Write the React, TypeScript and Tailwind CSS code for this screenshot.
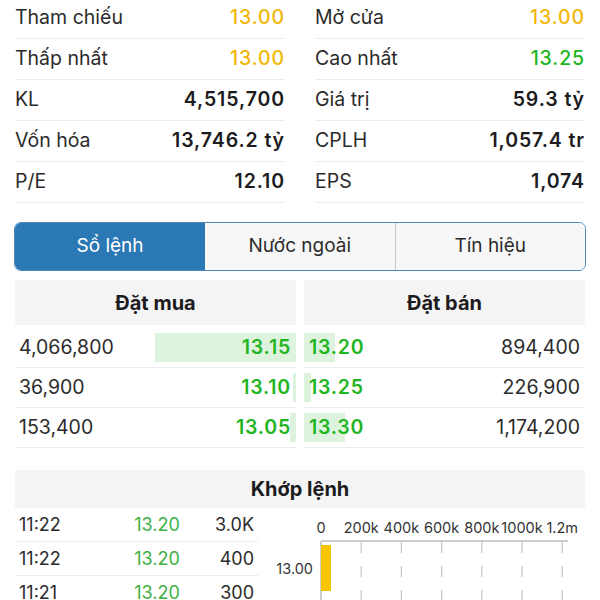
import React from "react";

const stats: [string, string, string, string, string, string][] = [
  ["Tham chiếu", "13.00", "text-[#f2b705] font-medium", "Mở cửa", "13.00", "text-[#f2b705] font-medium"],
  ["Thấp nhất", "13.00", "text-[#f2b705] font-medium", "Cao nhất", "13.25", "text-[#1fb523] font-medium"],
  ["KL", "4,515,700", "text-[#1c1c1e] font-semibold", "Giá trị", "59.3 tỷ", "text-[#1c1c1e] font-semibold"],
  ["Vốn hóa", "13,746.2 tỷ", "text-[#1c1c1e] font-semibold", "CPLH", "1,057.4 tr", "text-[#1c1c1e] font-semibold"],
  ["P/E", "12.10", "text-[#1c1c1e] font-semibold", "EPS", "1,074", "text-[#1c1c1e] font-semibold"],
];

const bids = [
  { qty: "4,066,800", price: "13.15", bar: 141 },
  { qty: "36,900", price: "13.10", bar: 3 },
  { qty: "153,400", price: "13.05", bar: 6 },
];

const asks = [
  { qty: "894,400", price: "13.20", bar: 31 },
  { qty: "226,900", price: "13.25", bar: 7 },
  { qty: "1,174,200", price: "13.30", bar: 41 },
];

const trades = [
  { t: "11:22", p: "13.20", q: "3.0K" },
  { t: "11:22", p: "13.20", q: "400" },
  { t: "11:21", p: "13.20", q: "300" },
];

function StatRow({ label, value, cls }: { label: string; value: string; cls: string }) {
  return (
    <div className="h-[41px] flex items-center justify-between border-b border-[#ececec]">
      <span className="text-[#2b2b2b]">{label}</span>
      <span className={`${cls} tracking-[0.9px]`}>{value}</span>
    </div>
  );
}

function VolumeChart() {
  const labels = ["0", "200k", "400k", "600k", "800k", "1000k", "1.2m"];
  return (
    <svg width="340" height="92" viewBox="0 0 340 92" className="block">
      {labels.map((l, i) => (
        <text
          key={l}
          x={63 + i * 40.2}
          y={25}
          textAnchor="middle"
          fontSize="14.5"
          fill="#333"
          fontFamily="Inter, sans-serif"
        >
          {l}
        </text>
      ))}
      <line x1="63" y1="33" x2="310" y2="33" stroke="#bdbdbd" strokeWidth="1.5" />
      <line x1="63" y1="33" x2="63" y2="92" stroke="#bdbdbd" strokeWidth="1.5" />
      {[1, 2, 3, 4, 5, 6].map((i) => (
        <line
          key={i}
          x1={63 + i * 40.2}
          y1="34"
          x2={63 + i * 40.2}
          y2="92"
          stroke="#c4c4c4"
          strokeWidth="1.2"
          strokeDasharray="11 13"
        />
      ))}
      <rect x="63" y="37" width="10" height="46" fill="#f8c400" />
      <text x="55" y="66" textAnchor="end" fontSize="14.5" fill="#333" fontFamily="Inter, sans-serif">
        13.00
      </text>
    </svg>
  );
}

export default function App() {
  return (
    <div className="w-[600px] h-[600px] overflow-hidden bg-white font-['Inter',sans-serif] text-[19.5px] text-[#2b2b2b]">
      {/* Stats */}
      <div className="grid grid-cols-2 gap-x-[30px] px-[15px] -mt-[2px]">
        <div>
          {stats.map((s) => (
            <StatRow key={s[0]} label={s[0]} value={s[1]} cls={s[2]} />
          ))}
        </div>
        <div>
          {stats.map((s) => (
            <StatRow key={s[3]} label={s[3]} value={s[4]} cls={s[5]} />
          ))}
        </div>
      </div>

      {/* Tabs */}
      <div className="mx-[14px] mt-[19px] h-[49px] flex rounded-[7px] border-[1.5px] border-[#4a88b9] overflow-hidden text-[19px]">
        <div className="w-[190px] flex items-center justify-center bg-[#2a78b4] text-white">Sổ lệnh</div>
        <div className="flex-1 flex items-center justify-center bg-[#f7f7f7] text-[#2b2b2b]">Nước ngoài</div>
        <div className="flex-1 flex items-center justify-center bg-[#f7f7f7] text-[#2b2b2b] border-l border-[#c8c8c8]">
          Tín hiệu
        </div>
      </div>

      {/* Order book */}
      <div className="mx-[15px] mt-[9px] grid grid-cols-2 gap-x-[8px]">
        <div>
          <div className="h-[45px] mb-[3px] flex items-center justify-center bg-[#f4f4f4] font-bold text-[20px] text-[#1c1c1e]">
            Đặt mua
          </div>
          {bids.map((b) => (
            <div key={b.price} className="relative h-[40px] flex items-center justify-between pl-[4px] pr-[5px] border-b border-[#ececec]">
              <div className="absolute right-0 top-[5px] bottom-[5px] bg-[#ddf3dd]" style={{ width: b.bar }} />
              <span className="relative">{b.qty}</span>
              <span className="relative font-semibold tracking-[0.8px] text-[#1fb523]">{b.price}</span>
            </div>
          ))}
        </div>
        <div>
          <div className="h-[45px] mb-[3px] flex items-center justify-center bg-[#f4f4f4] font-bold text-[20px] text-[#1c1c1e]">
            Đặt bán
          </div>
          {asks.map((a) => (
            <div key={a.price} className="relative h-[40px] flex items-center justify-between pl-[5px] pr-[5px] border-b border-[#ececec]">
              <div className="absolute left-0 top-[5px] bottom-[5px] bg-[#ddf3dd]" style={{ width: a.bar }} />
              <span className="relative font-semibold tracking-[0.8px] text-[#1fb523]">{a.price}</span>
              <span className="relative">{a.qty}</span>
            </div>
          ))}
        </div>
      </div>

      {/* Matched orders */}
      <div className="mx-[15px] mt-[22px] h-[38px] flex items-center justify-center bg-[#f4f4f4] font-bold text-[20px] text-[#1c1c1e]">
        Khớp lệnh
      </div>
      <div className="flex">
        <div className="ml-[15px] w-[243px] text-[18px]">
          {trades.map((t, i) => (
            <div key={i} className="h-[34px] grid grid-cols-[100px_76px_1fr] items-center pl-[4px] pr-[4px] border-b border-[#ececec]">
              <span>{t.t}</span>
              <span className="text-center text-[#3cb043]">{t.p}</span>
              <span className="text-right">{t.q}</span>
            </div>
          ))}
        </div>
        <VolumeChart />
      </div>
    </div>
  );
}
